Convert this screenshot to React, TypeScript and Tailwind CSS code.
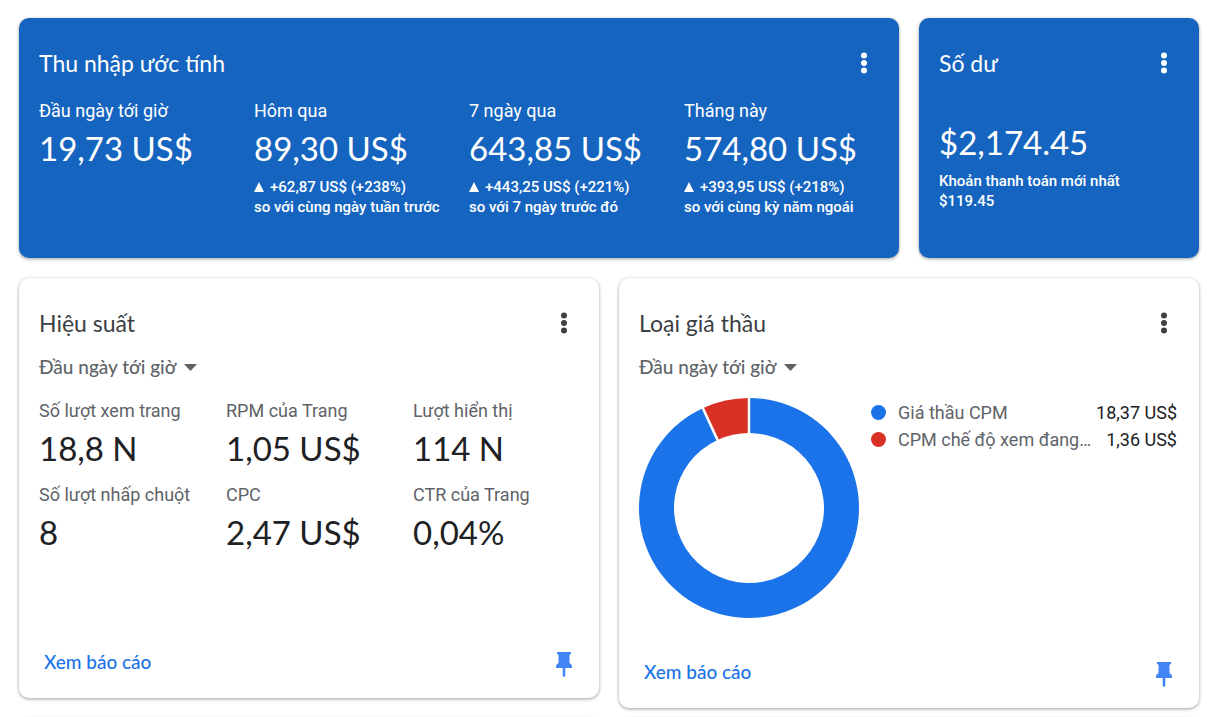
const cardShadow =
  "rounded-[10px] shadow-[0_1px_3px_0_rgba(60,64,67,0.35),0_1px_3px_1px_rgba(60,64,67,0.12)]";

const display = "font-['Lato','Roboto',sans-serif]";

function MenuButton({ label }: { label: string }) {
  return (
    <button type="button" aria-label={label} className="flex h-8 w-[30px] items-center justify-center rounded-full">
      <svg viewBox="0 0 30 30" className="h-[30px] w-[30px]" fill="currentColor" aria-hidden="true">
        <circle cx="15" cy="7.500" r="3" />
        <circle cx="15" cy="15" r="3" />
        <circle cx="15" cy="22.500" r="3" />
      </svg>
    </button>
  );
}

function CardHeader({ title }: { title: string }) {
  return (
    <header className="flex items-center justify-between">
      <h2 className={`text-[23px] leading-[30px] ${display}`}>{title}</h2>
      <MenuButton label={`Tuỳ chọn: ${title}`} />
    </header>
  );
}

function Pin() {
  return (
    <button type="button" aria-label="Ghim thẻ" className="flex h-8 w-[30px] items-center justify-center text-[#4285f4]">
      <svg viewBox="0 0 16 25" className="h-[25px] w-4" fill="currentColor" aria-hidden="true">
        <path d="M1 0h14v2l-1.500.8v8l2.500 2.700v2.500H9.300v8L8 25l-1.300-1v-8H0v-2.500l2.500-2.700v-8L1 2z" />
      </svg>
    </button>
  );
}

function PeriodSelect() {
  return (
    <div className="mt-[13px] flex h-[30px] items-center text-[#5f6368]">
      <div className="grid items-center">
        <select
          aria-label="Khoảng thời gian"
          defaultValue="today"
          className={`col-start-1 row-start-1 h-[30px] appearance-none bg-transparent pr-5 text-[19px] leading-[30px] font-medium ${display}`}
        >
          <option value="today">Đầu ngày tới giờ</option>
        </select>
        <svg
          viewBox="0 0 13 7"
          className="pointer-events-none col-start-1 row-start-1 h-[7px] w-[13px] justify-self-end"
          fill="currentColor"
          aria-hidden="true"
        >
          <path d="M0 0h13L6.500 7z" />
        </svg>
      </div>
    </div>
  );
}

function CardFooter() {
  return (
    <footer className="mt-auto flex items-start justify-between pl-[5px]">
      <a href="#report" className={`text-[19px] leading-7 font-medium text-[#1a73e8] ${display}`}>
        Xem báo cáo
      </a>
      <Pin />
    </footer>
  );
}

const earnings = [
  { label: "Đầu ngày tới giờ", value: "19,73 US$" },
  { label: "Hôm qua", value: "89,30 US$", delta: "+62,87 US$ (+238%)", note: "so với cùng ngày tuần trước" },
  { label: "7 ngày qua", value: "643,85 US$", delta: "+443,25 US$ (+221%)", note: "so với 7 ngày trước đó" },
  { label: "Tháng này", value: "574,80 US$", delta: "+393,95 US$ (+218%)", note: "so với cùng kỳ năm ngoái" },
];

const metrics = [
  { label: "Số lượt xem trang", value: "18,8 N" },
  { label: "RPM của Trang", value: "1,05 US$" },
  { label: "Lượt hiển thị", value: "114 N" },
  { label: "Số lượt nhấp chuột", value: "8" },
  { label: "CPC", value: "2,47 US$" },
  { label: "CTR của Trang", value: "0,04%" },
];

const bids = [
  { label: "Giá thầu CPM", value: "18,37 US$", dot: "bg-[#1a73e8]" },
  { label: "CPM chế độ xem đang…", value: "1,36 US$", dot: "bg-[#d93025]" },
];

function EarningsCard() {
  return (
    <section className={`bg-[#1565c0] px-5 pt-[29px] pb-[41px] text-white ${cardShadow}`}>
      <CardHeader title="Thu nhập ước tính" />
      <dl className="mt-5 grid grid-cols-4 gap-5">
        {earnings.map((e) => (
          <div key={e.label} className="whitespace-nowrap">
            <dt className="text-[18px] leading-6">{e.label}</dt>
            <dd>
              <p className={`mt-[2px] text-[33px] leading-[46px] ${display}`}>{e.value}</p>
              {e.delta && (
                <p className="mt-[6px] flex items-center text-[15px] leading-5 font-medium">
                  <svg viewBox="0 0 10 10" className="mr-[6px] h-[10px] w-[10px]" fill="currentColor" aria-hidden="true">
                    <path d="M5 0l5 10H0z" />
                  </svg>
                  {e.delta}
                </p>
              )}
              {e.note && <p className="text-[15px] leading-5 font-medium">{e.note}</p>}
            </dd>
          </div>
        ))}
      </dl>
    </section>
  );
}

function BalanceCard() {
  return (
    <section className={`bg-[#1565c0] px-5 pt-[29px] pb-10 text-white ${cardShadow}`}>
      <CardHeader title="Số dư" />
      <p className={`mt-10 text-[33px] leading-[46px] ${display}`}>$2,174.45</p>
      <p className="mt-[6px] text-[15px] leading-5 font-medium">Khoản thanh toán mới nhất</p>
      <p className="text-[15px] leading-5 font-medium">$119.45</p>
    </section>
  );
}

function PerformanceCard() {
  return (
    <section className={`flex min-h-[420px] flex-col bg-white px-5 pt-[29px] pb-[18px] text-[#3c4043] ${cardShadow}`}>
      <CardHeader title="Hiệu suất" />
      <PeriodSelect />
      <dl className="mt-[17px] grid grid-cols-[187fr_187fr_166fr] gap-y-3 whitespace-nowrap">
        {metrics.map((m) => (
          <div key={m.label}>
            <dt className="text-[18px] leading-6 text-[#5f6368]">{m.label}</dt>
            <dd className={`mt-[2px] text-[33px] leading-[46px] text-[#202124] ${display}`}>{m.value}</dd>
          </div>
        ))}
      </dl>
      <CardFooter />
    </section>
  );
}

const OUTER = 110;
const INNER = 75;

function ringSlice(from: number, to: number) {
  const point = (r: number, t: number) =>
    `${OUTER + r * Math.sin(t * 2 * Math.PI)} ${OUTER - r * Math.cos(t * 2 * Math.PI)}`;
  const large = to - from > 0.5 ? 1 : 0;
  return `M${point(OUTER, from)}A${OUTER} ${OUTER} 0 ${large} 1 ${point(OUTER, to)}L${point(INNER, to)}A${INNER} ${INNER} 0 ${large} 0 ${point(INNER, from)}Z`;
}

function Donut() {
  const split = 18.37 / (18.37 + 1.36);
  return (
    <svg viewBox="0 0 220 220" className="h-[220px] w-[220px] shrink-0" role="img" aria-label="Loại giá thầu">
      <path d={ringSlice(0, split)} fill="#1a73e8" />
      <path d={ringSlice(split, 0.99999)} fill="#d93025" />
      {[0, split].map((t) => (
        <line
          key={t}
          x1={OUTER + 72 * Math.sin(t * 2 * Math.PI)}
          y1={OUTER - 72 * Math.cos(t * 2 * Math.PI)}
          x2={OUTER + 112 * Math.sin(t * 2 * Math.PI)}
          y2={OUTER - 112 * Math.cos(t * 2 * Math.PI)}
          stroke="#fff"
          strokeWidth="2.5"
        />
      ))}
    </svg>
  );
}

function BidTypeCard() {
  return (
    <section className={`flex min-h-[430px] flex-col bg-white px-5 pt-[29px] pb-[18px] text-[#3c4043] ${cardShadow}`}>
      <CardHeader title="Loại giá thầu" />
      <PeriodSelect />
      <div className="mt-4 flex gap-3">
        <Donut />
        <ul className="min-w-0 flex-1 pt-[1px] pr-[2px]">
          {bids.map((b) => (
            <li key={b.label} className="flex h-[27px] items-center text-[18px] leading-6">
              <span className={`mr-3 h-[15px] w-[15px] shrink-0 rounded-full ${b.dot}`} />
              <span className="min-w-0 flex-1 whitespace-nowrap text-[#5f6368]">{b.label}</span>
              <span className="ml-3 shrink-0 text-[#202124]">{b.value}</span>
            </li>
          ))}
        </ul>
      </div>
      <CardFooter />
    </section>
  );
}

export default function App() {
  return (
    <main className="h-screen overflow-hidden bg-white pt-[18px] pr-2 pl-[19px] font-['Roboto',sans-serif]">
      <div className="grid grid-cols-[22fr_7fr] gap-5">
        <EarningsCard />
        <BalanceCard />
      </div>
      <div className="mt-5 grid grid-cols-2 items-start gap-5">
        <div className="grid gap-5">
          <PerformanceCard />
          <section className={`h-60 bg-white ${cardShadow}`} />
        </div>
        <div className="grid gap-[10px]">
          <BidTypeCard />
          <section className={`h-60 bg-white ${cardShadow}`} />
        </div>
      </div>
    </main>
  );
}
